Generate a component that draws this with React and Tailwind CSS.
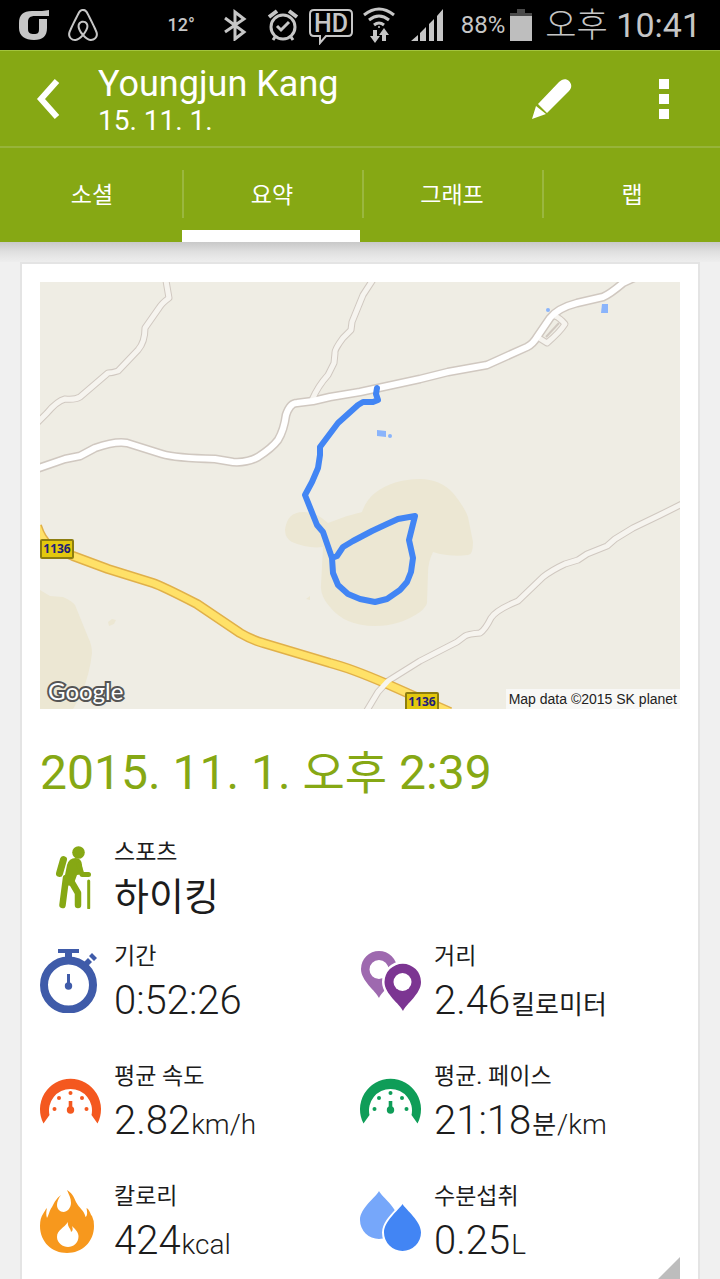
// pages/ActivitySummaryPage.js
import React, { useState } from 'react';
import { SiAirbnb } from 'react-icons/si';

const TABS = ['소셜', '요약', '그래프', '랩'];

/* ---------- Status bar ---------- */

const CarrierIcon = () => (
  <svg className="h-8 w-8" viewBox="0 0 32 32" fill="currentColor" aria-hidden="true">
    <path
      fillRule="evenodd"
      d="M30 1v6h-14c-5 0-7 2-7 6v7c0 4 2 5 6 5s5-1 5-5v-10h8v9c0 8-4 12-13 12S0 27 0 19v-5C0 6 4 2 13 2c8 0 13 0 17-1z"
    />
  </svg>
);

const BluetoothIcon = () => (
  <svg className="h-8 w-6" viewBox="0 0 24 32" fill="none" stroke="currentColor" strokeWidth="3" aria-hidden="true">
    <path d="M2 9l19 14-9 7V3l9 7L2 23" />
  </svg>
);

const AlarmIcon = () => (
  <svg className="h-8 w-8" viewBox="0 0 32 32" fill="none" stroke="currentColor" strokeWidth="3" aria-hidden="true">
    <circle cx="16" cy="18" r="12" />
    <path d="M10 17l4 4 8-8" />
    <path d="M2 8l8-6M30 8l-8-6" strokeWidth="4" />
    <path d="M8 28l-2 3M24 28l2 3" />
  </svg>
);

const HdIcon = () => (
  <svg className="mt-1 h-9 w-11" viewBox="0 0 44 36" aria-hidden="true">
    <path
      d="M5 1h34q4 0 4 4v18q0 4-4 4H17l-6 7v-7H5q-4 0-4-4V5q0-4 4-4z"
      fill="none"
      stroke="currentColor"
      strokeWidth="2"
    />
    <text x="22" y="23" textAnchor="middle" fontFamily="Roboto, sans-serif" fontSize="25" fontWeight="500" fill="currentColor">
      HD
    </text>
  </svg>
);

const WifiIcon = () => (
  <svg className="h-9 w-8" viewBox="0 0 32 36" fill="none" stroke="currentColor" strokeWidth="3" aria-hidden="true">
    <path d="M1 8q15-12 30 0M6 13q10-8 20 0M11 18q5-4 10 0" />
    <circle cx="16" cy="20" r="1" fill="currentColor" stroke="none" />
    <path d="M12 23v8M21 34v-8" strokeWidth="4" />
    <path d="M7 29h10l-5 7zM16 28h10l-5-7z" fill="currentColor" stroke="none" />
  </svg>
);

const SignalIcon = () => (
  <svg className="h-8 w-8" viewBox="0 0 32 32" fill="currentColor" aria-hidden="true">
    <path d="M0 32l7-6v6zM9 24l6-6v14H9zM18 15l5-5v22h-5zM26 7l6-7v32h-6z" />
  </svg>
);

const BatteryIcon = () => (
  <svg className="h-8 w-6" viewBox="0 0 24 32" aria-hidden="true">
    <path d="M8 0h8v4h7v4H1V4h7z" fill="#4a4a4a" />
    <path d="M1 7h22v25H1z" fill="#bebebe" />
  </svg>
);

const StatusBar = () => (
  <div className="flex h-[50px] items-center justify-between bg-black px-[19px] text-[#c6c6c6]">
    <div className="flex items-center gap-4">
      <CarrierIcon />
      <SiAirbnb className="h-8 w-8" />
    </div>
    <div className="flex items-center">
      <span className="mr-7 text-lg leading-8 font-medium">12°</span>
      <BluetoothIcon />
      <div className="ml-5 flex items-center gap-[10px]">
        <AlarmIcon />
        <HdIcon />
        <WifiIcon />
      </div>
      <div className="ml-4 flex items-center">
        <SignalIcon />
        <span className="mr-1 ml-[18px] text-2xl leading-8">88%</span>
        <BatteryIcon />
      </div>
      <span className="ml-3 text-[34px] leading-10">
        <span className="font-light">오후</span> 10:41
      </span>
    </div>
  </div>
);

/* ---------- Header ---------- */

const Header = () => (
  <header className="flex h-[98px] items-center border-t border-b-2 border-t-[#a3c43e] border-b-[#97b43a] text-white">
    <button type="button" aria-label="뒤로" className="flex h-full w-24 shrink-0 items-center justify-center">
      <svg className="h-10 w-6" viewBox="0 0 24 40" fill="none" stroke="currentColor" strokeWidth="6">
        <path d="M21 2L5 20l16 18" />
      </svg>
    </button>
    <div className="min-w-0 flex-1 pt-[2px] pl-[2px]">
      <h1 className="truncate text-4xl leading-[42px]">Youngjun Kang</h1>
      <p className="text-[28px] leading-8">15. 11. 1.</p>
    </div>
    <button type="button" aria-label="편집" className="flex h-full w-28 shrink-0 items-center justify-center">
      <svg className="h-10 w-10" viewBox="0 0 40 40" fill="currentColor">
        <path d="M6 25L27 3c3-3 7-4 10-1s3 7 0 10L15 34zM4 27l10 8-14 5z" />
      </svg>
    </button>
    <button type="button" aria-label="더보기" className="flex h-full w-28 shrink-0 items-center justify-center">
      <svg className="h-10 w-[10px]" viewBox="0 0 10 40" fill="currentColor">
        <path d="M0 0h10v10H0zM0 15h10v10H0zM0 30h10v10H0z" />
      </svg>
    </button>
  </header>
);

const TabBar = ({ active, onChange }) => (
  <nav className="grid h-[94px] grid-cols-4">
    {TABS.map((tab, index) => (
      <button
        key={tab}
        type="button"
        onClick={() => onChange(index)}
        className="relative flex items-center justify-center pt-[2px] pl-1 text-[23px] text-white"
      >
        {index > 0 && <span className="absolute top-[22px] left-[2px] h-12 w-[2px] bg-[#9ab73f]" />}
        {tab}
        {active === index && <span className="absolute right-0 bottom-0 left-[2px] h-3 bg-white" />}
      </button>
    ))}
  </nav>
);

/* ---------- Map ---------- */

const MINOR_ROADS = [
  'M165 275L169 298Q162 303 159 308L145 328Q145 342 138 350L118 371Q112 373 108 373L80 397Q75 400 65 399Q57 401 47 413L36 424',
  'M376 275L363 295L352 322L351 330L343 338Q334 350 335 353L334 363L328 375Q318 386 312 400',
  'M684 503L660 515L633 528L615 539L607 546L587 554L578 560L565 564Q552 570 543 577L518 601Q496 610 491 618Q485 630 480 633Q468 634 465 636L457 642L420 661L388 681L378 692L366 712',
  'M555 316Q560 318 565 324Q560 332 547 343L539 338',
];

const MAIN_ROAD =
  'M36 469L65 459L80 456L95 448Q115 441 127 443L162 454Q175 458 215 459L233 462Q247 463 258 457Q272 448 278 440Q284 430 286 415Q290 403 297 403L313 401L330 397L360 392L420 379L448 372L487 365L527 347Q533 344 537 337L550 318Q558 308 577 303L603 297Q610 294 623 283L640 275';

const HIGHWAY =
  'M37 526Q42 541 50 546L73 556L108 569L153 583Q162 586 197 604L240 633Q252 640 263 643L330 663Q350 668 387 684L405 692L450 712';

const TRACK =
  'M377 388L376 394L378 400L373 402L363 402L358 405L338 423L320 447L320 455L318 468L312 482L305 495L317 525L323 532L332 558L333 573L338 585L348 594L360 599L375 602L387 599L400 590L407 582L411 572L413 558L409 540L415 516L398 519L387 524L372 531L353 541L343 547L337 556L332 558';

const RoadShield = ({ children, className }) => (
  <span
    className={`absolute h-5 w-[34px] rounded-xs border-2 border-[#8d7d10] bg-[#e3c80d] text-center font-['Noto_Sans'] text-xs leading-4 font-bold text-[#20207a] ${className}`}
  >
    {children}
  </span>
);

const RouteMap = () => (
  <div className="relative aspect-[640/427] overflow-hidden bg-[#efede4]">
    <svg className="h-full w-full" viewBox="40 282 640 427" fill="none" strokeLinejoin="round" role="img" aria-label="경로">
      <g fill="#ece7d3">
        <path d="M285 530Q287 512 303 512Q315 511 328 523L347 516Q358 513 362 512Q366 500 375 493Q393 479 420 479Q440 479 453 493Q465 508 468 517L473 542Q473 555 468 555Q455 557 440 554L433 552Q428 562 428 573L427 603Q426 607 420 612Q400 626 375 626Q345 626 330 607Q320 596 321 585L323 547Q308 549 292 542Q285 538 285 530z" />
        <path d="M40 590L50 596L63 597Q72 601 75 605L88 637Q92 645 92 653Q90 672 82 693L73 709H40z" />
        <path d="M108 622l4-3 4 1-2 4-5 2zM306 599l4-3v4z" />
      </g>
      {MINOR_ROADS.map((d) => (
        <path key={d} d={d} stroke="#d0c8c0" strokeWidth="7" />
      ))}
      <path d={MAIN_ROAD} stroke="#d0c8c0" strokeWidth="9" />
      <path d={HIGHWAY} stroke="#e0b04a" strokeWidth="10" />
      <path d={HIGHWAY} stroke="#ffe168" strokeWidth="7" />
      {MINOR_ROADS.map((d) => (
        <path key={d} d={d} stroke="#f6f4ef" strokeWidth="5" />
      ))}
      <path d={MAIN_ROAD} stroke="#ffffff" strokeWidth="6" />
      <path d="M546 337L559 323" stroke="#d0c8c0" strokeWidth="2" />
      <g fill="#8ab4fb">
        <path d="M602 304h6v9h-7z" />
        <path d="M377 430l9 1v6l-9-1z" />
        <circle cx="548" cy="310" r="2" />
        <circle cx="390" cy="436" r="2" />
      </g>
      <path d={TRACK} stroke="#4285f4" strokeWidth="6" strokeLinecap="round" />
    </svg>
    <RoadShield className="top-[257px] left-0">1136</RoadShield>
    <RoadShield className="top-[410px] left-[365px]">1136</RoadShield>
    <span className="absolute bottom-0 left-2 font-['Lato'] text-2xl leading-9 text-white [-webkit-text-stroke:4px_#555] [paint-order:stroke_fill]">
      Google
    </span>
    <span className="absolute right-0 bottom-0 bg-[#f8f8f6] px-[3px] font-['Liberation_Sans'] text-sm leading-5 text-[#222]">
      Map data ©2015 SK planet
    </span>
  </div>
);

/* ---------- Stat icons ---------- */

const HikerIcon = () => (
  <g fill="#86a814" stroke="#86a814" strokeLinecap="round" strokeLinejoin="round">
    <circle cx="38.500" cy="7.500" r="6.300" stroke="none" />
    <path d="M23.500 14.500l-4 14" strokeWidth="7" fill="none" />
    <path d="M23 40l4-20q2-7 8.500-7 6 0 6.500 7l1 9-6 1-4 11z" stroke="none" />
    <path d="M39 20l3 9.500h6.500" strokeWidth="5" fill="none" />
    <path d="M26 33l-3.500 27M31 36l7 12v12" strokeWidth="6.500" fill="none" />
    <path d="M48.700 36v27" strokeWidth="3" fill="none" />
  </g>
);

const StopwatchIcon = () => (
  <g fill="#3f5ba9">
    <circle cx="28.5" cy="36" r="24.5" fill="none" stroke="#3f5ba9" strokeWidth="8" />
    <path d="M18 0h21v4h-7v5h-7V4h-7zM27 25h3v10h-3z" />
    <circle cx="28.5" cy="37" r="3.7" />
    <path d="M43 14l5-5 4 4-4 4zM49 7l3-3 5 5-3 3z" />
  </g>
);

const PinsIcon = () => (
  <>
    <path
      fill="#9e69af"
      fillRule="evenodd"
      d="M19 49C16 42 1 32 1 20a18 18 0 0 1 36 0C37 32 22 42 19 49zM19 11a9.5 9.5 0 1 0 0 19 9.5 9.5 0 0 0 0-19z"
    />
    <path
      fill="#7c3592"
      stroke="#fff"
      strokeWidth="5"
      paintOrder="stroke"
      d="M43 62C40 55 24.500 45 24.500 33a18.200 18.200 0 0 1 36.500 0C61 45 46 55 43 62z"
    />
    <circle cx="42.500" cy="33" r="9" fill="#fff" />
  </>
);

const GaugeIcon = ({ color }) => (
  <g fill={color}>
    <path d="M3.500 54.500A30.500 30.500 0 1 1 57.500 54.500L51.500 46A21.500 21.500 0 1 0 9.500 46z" />
    <circle cx="14.500" cy="40" r="2" />
    <circle cx="19" cy="29" r="2" />
    <circle cx="30.500" cy="24" r="2" />
    <circle cx="42" cy="29" r="2" />
    <circle cx="46.500" cy="40" r="2" />
    <circle cx="30.500" cy="41" r="3.700" />
    <path d="M28.700 32h3.600v8h-3.600z" />
  </g>
);

const FlameIcon = () => (
  <>
    <path
      fill="#f7981d"
      d="M27 1C32 4 34 8 36 13 39 19 44 21 45.500 28 48 26 47 22 46.500 19 50 21 50 25 52 27Q54 31 54 37C54 53 42 64 27 64S0 53 0 37Q0 29 3 25C5 22 5 21 7 19 6 23 6 26 7 29 9 26 9 22 12 18 15 12 17 9 21 6 18 10 17 13 17 16 17 20 20 23 23.500 23S31 19 31 14C31 9 29 6 27 1z"
    />
    <path
      fill="#fff"
      d="M28 33C27 38 31 39 31 43 33 42 33 40 32 37 35 40 38.500 43 38.500 47.500 38.500 54 33 58 28 58S17 54 17 48C17 41 24 39 28 33z"
    />
  </>
);

const DropsIcon = () => (
  <>
    <path fill="#76a7fa" d="M19 2C22 8 38 19 38 31a19 19 0 0 1-38 0C0 19 16 8 19 2z" />
    <path
      fill="#4285f4"
      stroke="#fff"
      strokeWidth="4"
      paintOrder="stroke"
      d="M42.500 15C46 21 61 32 61 43.500a18.500 18.500 0 0 1-37 0C24 32 39 21 42.500 15z"
    />
  </>
);

/* ---------- Stats ---------- */

const Stat = ({ icon, label, children }) => (
  <div className="flex items-start gap-3">
    <svg className="mt-[10px] h-16 w-[62px] shrink-0" viewBox="0 0 62 64" aria-hidden="true">
      {icon}
    </svg>
    <dl className="whitespace-nowrap text-[#1c1c1c]">
      <dt className="text-[23px] leading-9">{label}</dt>
      <dd className="text-[40px] leading-[52px] font-light">{children}</dd>
    </dl>
  </div>
);

const Unit = ({ children }) => <span className="ml-px text-[28px] leading-none">{children}</span>;
const KoreanUnit = ({ children }) => <span className="ml-px text-[26px] leading-none font-normal">{children}</span>;

const App = () => {
  const [activeTab, setActiveTab] = useState(1);

  return (
    <div className="flex min-h-screen flex-col bg-[#f0f0f0] font-['Roboto','Noto_Sans_CJK_KR',sans-serif]">
      <StatusBar />
      <div className="bg-[#86a814]">
        <Header />
        <TabBar active={activeTab} onChange={setActiveTab} />
      </div>

      {/* Shadow below the tabs */}
      <div className="h-5 bg-linear-to-b from-[#c8c8c8] via-[#e0e0e0] to-[#eeeeee]" />

      <main className="mx-5 flex flex-1 flex-col border-2 border-b-0 border-[#e4e4e4] bg-white px-[18px] pt-[18px]">
        <RouteMap />

        <h2 className="mt-9 text-5xl leading-[56px] text-[#86a814]">
          2015. 11. 1. <span className="text-[46px] leading-none">오후</span> 2:39
        </h2>

        <div className="mt-[34px]">
          <Stat icon={<HikerIcon />} label="스포츠">
            <span className="text-[38px] leading-none font-normal">하이킹</span>
          </Stat>
        </div>

        <div className="mt-4 grid grid-cols-2 gap-y-8">
          <Stat icon={<StopwatchIcon />} label="기간">0:52:26</Stat>
          <Stat icon={<PinsIcon />} label="거리">
            2.46<KoreanUnit>킬로미터</KoreanUnit>
          </Stat>
          <Stat icon={<GaugeIcon color="#f4581f" />} label="평균 속도">
            2.82<Unit>km/h</Unit>
          </Stat>
          <Stat icon={<GaugeIcon color="#0f9d58" />} label="평균. 페이스">
            21:18<KoreanUnit>분</KoreanUnit><Unit>/km</Unit>
          </Stat>
          <Stat icon={<FlameIcon />} label="칼로리">
            424<Unit>kcal</Unit>
          </Stat>
          <Stat icon={<DropsIcon />} label="수분섭취">
            0.25<Unit>L</Unit>
          </Stat>
        </div>

        <svg className="-mt-[10px] h-[22px] w-[22px] self-end" viewBox="0 0 22 22" fill="#bdbdbd" aria-hidden="true">
          <path d="M22 0v22H0z" />
        </svg>
      </main>
    </div>
  );
};

export default App;
